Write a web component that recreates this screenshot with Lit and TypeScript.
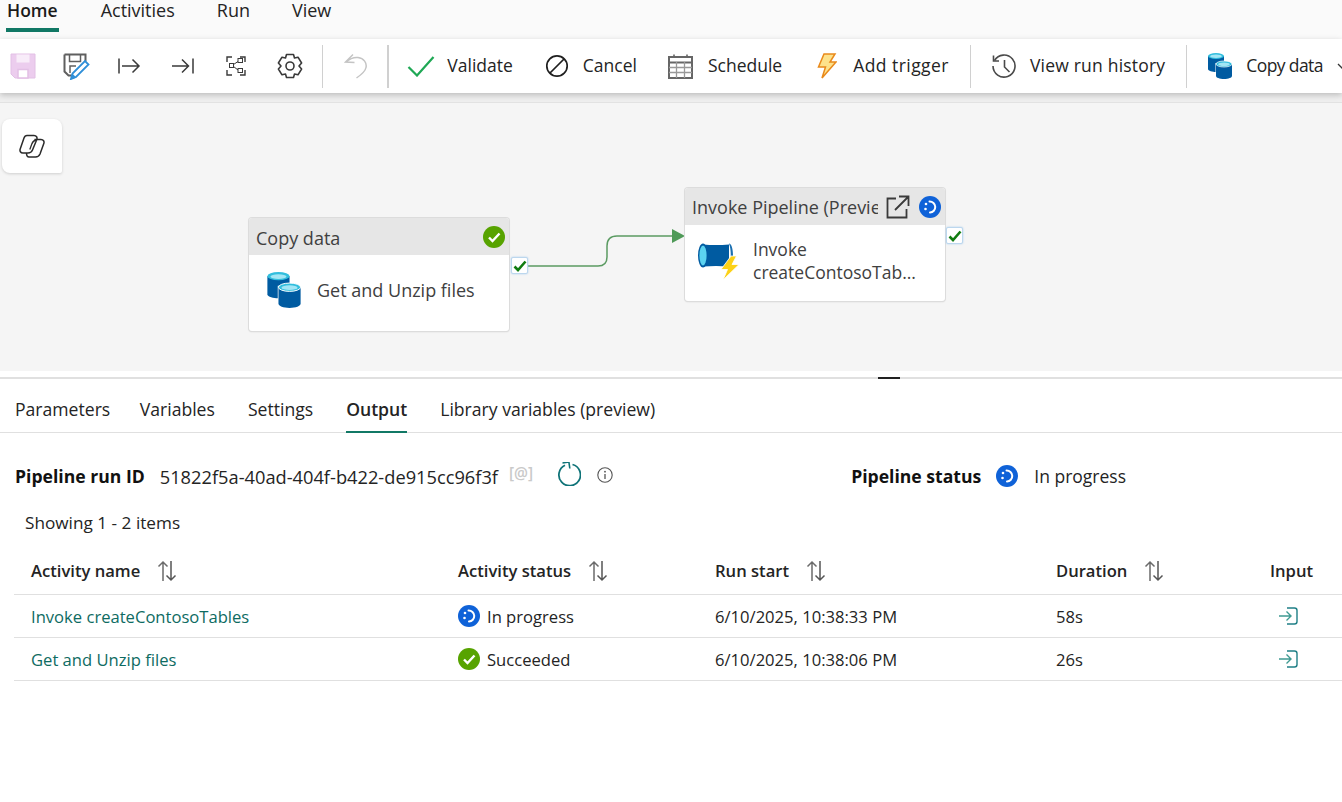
import { LitElement, css, html, svg } from 'lit';
import { customElement } from 'lit/decorators.js';

const icon = (w: number, h: number, body: unknown, box = `0 0 ${w} ${h}`) =>
  html`<svg class="ico" width=${w} height=${h} viewBox=${box} fill="none">${body}</svg>`;

const saveIcon = icon(26, 26, svg`
  <path d="M1 1h24v24H5l-4-4z" fill="#eccdee" stroke="#e2c0e5"/>
  <path d="M6.500 1.500h13v8h-13z" fill="#f8ecf9"/>
  <path d="M8 16.500h10V25H8z" fill="#fff" stroke="#e2c0e5" stroke-width="1.500"/>`);

const saveAsIcon = icon(27, 27, svg`
  <path d="M1.500 1.500h21v7M1.500 1.500v17l4 4h6" stroke="#5f5f5f" stroke-width="2"/>
  <path d="M6.500 2v6.500h11V2M7 20v-7h6" stroke="#5f5f5f" stroke-width="1.500"/>
  <path d="M8 26l1.500-5.500L22 8l3.500 3.500L13 24z" fill="#fff" stroke="#2f8fd8" stroke-width="1.800"/>
  <path d="M7.500 26.500l1.800-6 4 4z" fill="#2f8fd8"/>`);

const runFromIcon = icon(23, 18, svg`
  <path d="M1 1.500v15M4 9h17M14.500 2.500L21 9l-6.500 6.500" stroke="#3a3a3a" stroke-width="1.500"/>`);

const runToIcon = icon(23, 18, svg`
  <path d="M22 1.500v15M1 9h16.500M11 2.500L17.500 9 11 15.500" stroke="#3a3a3a" stroke-width="1.500"/>`);

const selectIcon = icon(20, 20, svg`
  <path d="M1 6V1h5M14 1h5v5M1 14v5h5M14 19h5v-5" stroke="#3a3a3a" stroke-width="1.400"/>
  <rect x="3.500" y="7.500" width="4" height="4" stroke="#3a3a3a"/>
  <rect x="12" y="2.500" width="4.500" height="4" stroke="#3a3a3a"/>
  <rect x="12" y="12.500" width="4.500" height="4" stroke="#3a3a3a"/>
  <path d="M7.500 8.500L12 5.500M7.500 10.500l4.500 3.500" stroke="#3a3a3a"/>`);

const gearIcon = icon(28, 26, svg`
  <path d="M10.500 1.500h7l1 3.500 3.500-.8 3.600 5.800-2.600 3 2.600 3-3.600 5.800-3.500-.8-1 3.500h-7l-1-3.500-3.500.8-3.600-5.800 2.600-3-2.600-3L6 4.200l3.500.8z" stroke="#3a3a3a" stroke-width="1.600" stroke-linejoin="round"/>
  <circle cx="14" cy="13" r="4" stroke="#3a3a3a" stroke-width="1.600"/>`);

const undoIcon = icon(24, 26, svg`
  <path d="M9 1.500L1.500 9l9 .5M2 9c4-3.500 8-5 12-4.500 6 .8 9 5.500 8 10-.5 3-3 6-9.500 10.500" stroke="#c4c4c4" stroke-width="1.500"/>`);

const checkIcon = icon(28, 22, svg`
  <path d="M1.500 12l8.500 8.500L26.500 2" stroke="#1fa855" stroke-width="2.200"/>`);

const cancelIcon = icon(24, 24, svg`
  <circle cx="12" cy="12" r="10.200" stroke="#1f1f1f" stroke-width="1.700"/>
  <path d="M5 19L19 5" stroke="#1f1f1f" stroke-width="1.700"/>`);

const calendarIcon = icon(25, 25, svg`
  <rect x="1" y="3" width="23" height="21" stroke="#666" stroke-width="2"/>
  <path d="M6 .5V4M19 .5V4" stroke="#666" stroke-width="1.600"/>
  <path d="M1 8.500h23" stroke="#666" stroke-width="2"/>
  <path d="M1 13.500h23M1 18.500h23M8.500 8v16M16.500 8v16" stroke="#999" stroke-width="1.300"/>`);

const boltIcon = icon(20, 26, svg`
  <path d="M7 1h11l-5 8h6L5 25l3.500-11H1.500z" fill="#fde28b" stroke="#e98a1b" stroke-width="1.500" stroke-linejoin="miter"/>`);

const historyIcon = icon(26, 26, svg`
  <path d="M3.500 7.500A11 11 0 1 1 2 13" stroke="#4a4a4a" stroke-width="1.600"/>
  <path d="M2.500 2.500v5.500H8M13.500 7v7l5 5" stroke="#4a4a4a" stroke-width="1.600"/>`);

const cylinders = (scale: number) => icon(Math.round(24 * scale), Math.round(26 * scale), svg`
  <path d="M0 3v13c0 1.800 4.500 3 8 3h8V3z" fill="#005ba1"/>
  <ellipse cx="8" cy="3" rx="8" ry="3" fill="#32bedd"/>
  <ellipse cx="8" cy="3.300" rx="5.800" ry="1.700" fill="#a3e6f5"/>
  <path d="M7.500 10v13c0 1.700 3.800 3 8.500 3s8-1.300 8-3V10z" fill="#fff"/>
  <path d="M8 11v12c0 1.600 3.500 3 8 3s8-1.400 8-3V11z" fill="#005ba1"/>
  <ellipse cx="16" cy="11" rx="8" ry="3" fill="#32bedd" stroke="#fff" stroke-width=".7"/>
  <ellipse cx="16" cy="11.300" rx="5.800" ry="1.700" fill="#a3e6f5"/>`, '0 0 24 26');

const invokeIcon = icon(42, 37, svg`
  <path d="M5 1.500c9 .8 17 .8 26 0v22c-9-.8-17-.8-26 0z" fill="#005ba1"/>
  <path d="M31 .5c2.500 0 4 5 4 12s-1.500 12-4 12c1.200-3 1.800-7 1.800-12S32.200 3.500 31 .5z" fill="#1a6fb0"/>
  <ellipse cx="5" cy="12.500" rx="5" ry="12" fill="#005ba1"/>
  <ellipse cx="5" cy="12.500" rx="3.600" ry="10" fill="#5cd3f0"/>
  <path d="M33 13l-10 13.500h6.500L25 37l16-15.500h-7l4.500-8.500z" fill="#fcd116" stroke="#fff" stroke-width=".8"/>`);

const progressIcon = (size: number) => icon(size, size, svg`
  <circle cx="11" cy="11" r="11" fill="#0f62d8"/>
  <path d="M10.500 5.500a5.500 5.500 0 0 1 .5 11" stroke="#fff" stroke-width="2" stroke-linecap="round"/>
  <circle cx="7" cy="8" r="1.300" fill="#fff"/>
  <circle cx="6.500" cy="13" r="1.300" fill="#fff"/>`, '0 0 22 22');

const successIcon = (size: number) => icon(size, size, svg`
  <circle cx="11" cy="11" r="11" fill="#57a300"/>
  <path d="M6 11.500l3.500 3.500L16.500 7.500" stroke="#fff" stroke-width="2.400"/>`, '0 0 22 22');

const openIcon = icon(24, 24, svg`
  <path d="M10 3.500H1.500v19h19V14M13 1.500h9.500V11M22 2L9 15" stroke="#3a3a3a" stroke-width="1.800"/>`);

const sortIcon = icon(20, 22, svg`
  <path d="M6 21V2M1.500 6.500L6 2l4.500 4.500" stroke="#6b6b6b" stroke-width="1.500"/>
  <path d="M14 1v19M9.500 15.500L14 20l4.500-4.500" stroke="#555" stroke-width="1.500"/>`);

const inputIcon = icon(20, 18, svg`
  <path d="M1 9h12M8.500 4.500L13 9l-4.500 4.500" stroke="#3f9a92" stroke-width="1.400"/>
  <path d="M9 1h7.500c1.500 0 2.500 1 2.500 2.500v11c0 1.500-1 2.500-2.500 2.500H9" stroke="#1f7f86" stroke-width="1.400"/>`);

const refreshIcon = icon(24, 24, svg`
  <path d="M8 3.200A10.800 10.800 0 1 0 15.500 2.500" stroke="#0f7378" stroke-width="1.800"/>
  <path d="M5.800 .5h6.500v6.500" stroke="#0f7378" stroke-width="1.600" transform="rotate(-8 9 3)"/>`);

const infoIcon = icon(16, 16, svg`
  <circle cx="8" cy="8" r="7.200" stroke="#555" stroke-width="1.100"/>
  <path d="M8 7v5" stroke="#555" stroke-width="1.300"/>
  <circle cx="8" cy="4.700" r=".9" fill="#555"/>`);

const copilotIcon = icon(26, 24, svg`
  <path d="M8 1.500h7c2.500 0 3.500 2 2.800 4L13.500 16c-.8 2-2.500 3-4.500 3H4c-2.500 0-3.500-2-2.800-4L5 4c.5-1.500 1.500-2.500 3-2.500z" stroke="#2b2b2b" stroke-width="1.500"/>
  <path d="M15.500 5.500H22c2.500 0 3.500 2 2.800 4L21 20c-.8 2-2.500 3-4.500 3H10c-1.500 0-2.500-1.500-2.500-4" stroke="#2b2b2b" stroke-width="1.500"/>
  <path d="M17 6c-2.500.5-3.500 2-4.200 4l-2 5.500" stroke="#2b2b2b" stroke-width="1.300"/>`);

const nodeCheck = html`<svg width="14" height="14" viewBox="0 0 14 14" fill="none"><path d="M1.500 7.500l3.500 3.500L12.500 2.500" stroke="#107c10" stroke-width="2.600"/></svg>`;

@customElement('app-root')
export class AppRoot extends LitElement {
  static styles = css`
    :host {
      display: block;
      height: 802px;
      overflow: hidden;
      background: #fff;
      color: #242424;
      font-family: 'Open Sans', 'Noto Sans', sans-serif;
      font-size: 17.5px;
    }

    .ico { display: block; flex: none; }

    .menu {
      display: flex;
      height: 39px;
      padding-left: 6px;
      background: #fafafa;
    }

    .menu span {
      height: 32px;
      margin-right: 42px;
      line-height: 20px;
      font-size: 18px;
    }

    .menu .on {
      border-bottom: 4px solid #117865;
      font-weight: 600;
      font-size: 17.500px;
      height: 28px;
      margin-right: 42px;
      padding: 0 1px;
      color: #1a1a1a;
    }

    .toolbar {
      position: relative;
      z-index: 1;
      display: flex;
      align-items: center;
      height: 54px;
      background: #fff;
      box-shadow: 0 2px 6px rgba(0, 0, 0, 0.22);
      white-space: nowrap;
      overflow: hidden;
    }

    .tool {
      display: flex;
      align-items: center;
      justify-content: center;
      width: 53.400px;
      flex: none;
    }

    .tools { display: flex; margin-left: -4px; }

    .sep {
      width: 1px;
      height: 43px;
      background: #d0d0d0;
      flex: none;
    }

    .sep.first { margin-left: 6px; }
    .sep.undo-after { margin-left: 19px; margin-right: 18px; width: 2px; }
    .undo { margin-left: 21px; }

    .act {
      display: flex;
      align-items: center;
      gap: 13px;
      flex: none;
    }

    .act span { margin-bottom: 2px; }

    .validate { margin-right: 32px; gap: 12px; }
    .cancel { margin-right: 31px; gap: 14px; }
    .schedule { margin-right: 35px; gap: 15px; }
    .trigger { margin-right: 21px; gap: 16px; }
    .trigger span { letter-spacing: 0.45px; }
    .history { margin: 0 21px 0 20px; gap: 13px; }
    .history span { letter-spacing: 0.2px; }
    .copy { margin-left: 21px; gap: 14px; }
    .copy span { letter-spacing: -0.6px; }

    .strip {
      height: 9px;
      background: #efefef;
      border-bottom: 1px solid #e2e2e2;
    }

    .canvas {
      position: relative;
      height: 268px;
      background: #f5f5f5;
    }

    .copilot {
      position: absolute;
      left: 2px;
      top: 16px;
      width: 60px;
      height: 54px;
      display: flex;
      align-items: center;
      justify-content: center;
      background: #fff;
      border-radius: 8px 8px 2px 8px;
      box-shadow: 0 1px 3px rgba(0, 0, 0, 0.16);
    }

    .node {
      position: absolute;
      width: 260px;
      height: 113px;
      background: #fff;
      border-radius: 3px;
      box-shadow: 0 0 0 1px #dcdcdc, 0 1px 2px rgba(0, 0, 0, 0.12);
      color: #404040;
    }

    .n1 { left: 249px; top: 115px; }
    .n2 { left: 685px; top: 85px; }

    .head {
      display: flex;
      align-items: center;
      height: 37px;
      padding: 0 4px 0 7px;
      background: #e6e6e6;
      border-radius: 3px 3px 0 0;
      font-size: 18px;
    }

    .title {
      flex: 1;
      padding-top: 3px;
      overflow: hidden;
      white-space: nowrap;
    }

    .n2 .title { flex: none; width: 186px; padding-top: 1px; }
    .n2 .head .ico:nth-of-type(1) { margin-left: 8px; margin-right: 9px; }

    .body {
      display: flex;
      align-items: center;
      height: 70px;
      padding: 0 0 6px 18px;
      gap: 16px;
      line-height: 23px;
      font-size: 18px;
    }

    .n2 .body {
      height: 72px;
      padding: 0 0 4px 13px;
      gap: 13px;
      font-size: 17.500px;
    }

    .tick {
      position: absolute;
      left: 262px;
      top: 39px;
      width: 15px;
      height: 15px;
      display: flex;
      align-items: center;
      justify-content: center;
      background: #fff;
      border: 1px solid #bcd7ee;
      border-radius: 2px;
      box-shadow: 0 0 2px #a9cdee;
    }

    .n2 .tick { left: 261px; }

    .link {
      position: absolute;
      left: 528px;
      top: 120px;
    }

    .split {
      position: relative;
      box-sizing: border-box;
      height: 8px;
      background: #fff;
      border-bottom: 2px solid #e0e0e0;
    }

    .split::after {
      content: '';
      position: absolute;
      left: 878px;
      top: 6px;
      width: 22px;
      height: 2px;
      background: #222;
    }

    .tabs {
      display: flex;
      gap: 33px;
      height: 54px;
      box-sizing: border-box;
      padding: 17px 0 0 15px;
      border-bottom: 1px solid #e0e0e0;
      font-size: 17.600px;
    }

    .tabs span { height: 35px; line-height: 27px; }
    .tabs span:first-child { margin-right: -3.500px; }

    .tabs .on {
      font-weight: 600;
      border-bottom: 2px solid #117865;
    }

    .run {
      display: flex;
      align-items: center;
      height: 32px;
      margin-top: 27px;
      padding-left: 15px;
    }

    .run b { font-weight: 700; color: #111; font-size: 17.600px; white-space: nowrap; }
    .run .id { margin-left: 15px; font-size: 18.250px; }
    .run .at { margin-left: 11px; font-size: 15.500px; color: #c9c9c9; font-weight: 600; margin-bottom: 6px; }
    .run .refresh { margin-left: 24px; margin-bottom: 4px; }
    .run .info { margin-left: 16px; margin-bottom: 2px; }
    .status { margin-left: 238px; display: flex; align-items: center; }
    .status .ico { margin: 0 16px 0 15px; }

    .count { margin: 17px 0 0 25px; height: 28px; line-height: 28px; font-size: 17.200px; }

    .table { margin: 12px 0 0 14px; font-size: 16.600px; }

    .row {
      display: grid;
      grid-template-columns: 427px 257px 341px 214px 1fr;
      align-items: center;
      height: 43px;
      padding-left: 17px;
      border-bottom: 1px solid #e0e0e0;
      box-sizing: border-box;
    }

    .row.top {
      height: 46px;
      padding-bottom: 3px;
      font-weight: 600;
    }

    .th { display: flex; align-items: center; gap: 17px; }
    .th .ico { margin-top: 2px; }
    .link-cell { color: #0e6b62; }
    .cell-status { display: flex; align-items: center; gap: 7px; }
    .cell-input { padding-left: 8px; }
  `;

  render() {
    return html`
      <div class="menu">
        <span class="on">Home</span><span>Activities</span><span>Run</span><span>View</span>
      </div>
      <div class="toolbar">
        <div class="tools">
          <div class="tool">${saveIcon}</div>
          <div class="tool">${saveAsIcon}</div>
          <div class="tool">${runFromIcon}</div>
          <div class="tool">${runToIcon}</div>
          <div class="tool">${selectIcon}</div>
          <div class="tool">${gearIcon}</div>
        </div>
        <div class="sep first"></div>
        <div class="undo">${undoIcon}</div>
        <div class="sep undo-after"></div>
        <div class="act validate">${checkIcon}<span>Validate</span></div>
        <div class="act cancel">${cancelIcon}<span>Cancel</span></div>
        <div class="act schedule">${calendarIcon}<span>Schedule</span></div>
        <div class="act trigger">${boltIcon}<span>Add trigger</span></div>
        <div class="sep"></div>
        <div class="act history">${historyIcon}<span>View run history</span></div>
        <div class="sep"></div>
        <div class="act copy">
          ${cylinders(1)}<span>Copy data</span>
          <svg class="chev" width="10" height="6" viewBox="0 0 10 6" fill="none"><path d="M1 1l4 4 4-4" stroke="#333" stroke-width="1.300"/></svg>
        </div>
      </div>
      <div class="strip"></div>
      <div class="canvas">
        <div class="copilot">${copilotIcon}</div>
        <svg class="link" width="160" height="50" viewBox="0 0 160 50" fill="none">
          <path d="M0 43h70c6 0 9-3 9-9V23c0-6 3-10 10-10h56" stroke="#5b9b62" stroke-width="1.500"/>
          <path d="M144 6l13 7-13 7z" fill="#4f9a58"/>
        </svg>
        <div class="node n1">
          <div class="head"><span class="title">Copy data</span>${successIcon(22)}</div>
          <div class="body">${cylinders(1.4)}<span>Get and Unzip files</span></div>
          <div class="tick">${nodeCheck}</div>
        </div>
        <div class="node n2">
          <div class="head"><span class="title">Invoke Pipeline (Preview)</span>${openIcon}${progressIcon(22)}</div>
          <div class="body">${invokeIcon}<span>Invoke<br />createContosoTab...</span></div>
          <div class="tick">${nodeCheck}</div>
        </div>
      </div>
      <div class="split"></div>
      <div class="tabs">
        <span>Parameters</span><span>Variables</span><span>Settings</span><span class="on">Output</span><span>Library variables (preview)</span>
      </div>
      <div class="run">
        <b>Pipeline run ID</b>
        <span class="id">51822f5a-40ad-404f-b422-de915cc96f3f</span>
        <span class="at">[@]</span>
        <span class="refresh">${refreshIcon}</span>
        <span class="info">${infoIcon}</span>
        <div class="status"><b>Pipeline status</b>${progressIcon(22)}<span>In progress</span></div>
      </div>
      <div class="count">Showing 1 - 2 items</div>
      <div class="table">
        <div class="row top">
          <div class="th">Activity name ${sortIcon}</div>
          <div class="th">Activity status ${sortIcon}</div>
          <div class="th">Run start ${sortIcon}</div>
          <div class="th">Duration ${sortIcon}</div>
          <div>Input</div>
        </div>
        <div class="row">
          <div class="link-cell">Invoke createContosoTables</div>
          <div class="cell-status">${progressIcon(22)}<span>In progress</span></div>
          <div>6/10/2025, 10:38:33 PM</div>
          <div>58s</div>
          <div class="cell-input">${inputIcon}</div>
        </div>
        <div class="row">
          <div class="link-cell">Get and Unzip files</div>
          <div class="cell-status">${successIcon(22)}<span>Succeeded</span></div>
          <div>6/10/2025, 10:38:06 PM</div>
          <div>26s</div>
          <div class="cell-input">${inputIcon}</div>
        </div>
      </div>
    `;
  }
}
